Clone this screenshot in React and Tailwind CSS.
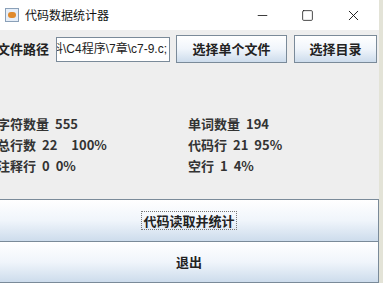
import { Minus, Square, X } from 'lucide-react'

const font = { fontFamily: '"Noto Sans CJK SC", "Noto Sans", sans-serif' }

function JButton({ children, className = '', focused = false }) {
  return (
    <div
      className={`flex items-center justify-center border border-[#7a8a99] bg-gradient-to-b from-[#ffffff] via-[#f0f5fb] to-[#cddcec] text-[13px] font-bold text-[#222] ${className}`}
    >
      <span className={focused ? 'border border-dotted border-[#777] px-[1px] leading-[17px]' : ''}>{children}</span>
    </div>
  )
}

function Stat({ label, value, extra }) {
  return (
    <div className="flex h-[21px] items-center gap-[6px] whitespace-nowrap text-[13px] font-bold text-[#333]">
      <span>{label}</span>
      <span>{value}</span>
      {extra && <span>{extra}</span>}
    </div>
  )
}

export default function App() {
  return (
    <div className="flex h-[283px] w-[383px] overflow-hidden bg-[#e3e3d7]" style={font}>
      <div className="flex w-[379px] flex-col bg-[#eeeeee]">
        {/* Title bar */}
        <div className="flex h-[30px] items-center bg-white">
          <div className="ml-[5px] flex h-[14px] w-[14px] items-center justify-center border border-[#8aa0b8] bg-[#e6eef8]">
            <div className="h-[6px] w-[8px] rounded-sm bg-[#e08a2c]" />
          </div>
          <span className="ml-[6px] text-[12px] text-[#111]">代码数据统计器</span>
          <div className="ml-auto flex items-center">
            <Minus size={15} strokeWidth={1.3} className="mr-[31px] text-[#111]" />
            <Square size={13} strokeWidth={1.4} className="mr-[31px] text-[#111]" />
            <X size={17} strokeWidth={1.3} className="mr-[17px] text-[#111]" />
          </div>
        </div>

        {/* Path row */}
        <div className="mt-[5px] flex h-[28px] items-center">
          <span className="ml-[-3px] text-[13px] font-bold text-[#222]">文件路径</span>
          <div className="ml-[7px] flex h-[25px] w-[114px] items-center justify-end overflow-hidden whitespace-nowrap border border-[#7a8a99] bg-white pr-[2px] text-[12px] text-[#222]" style={{ fontFamily: '"Liberation Sans", "Noto Sans CJK SC", sans-serif' }}>
            料\C4程序\7章\c7-9.c;
          </div>
          <JButton className="ml-[6px] h-[28px] w-[111px]">选择单个文件</JButton>
          <JButton className="ml-[7px] h-[28px] w-[83px]">选择目录</JButton>
        </div>

        {/* Stats */}
        <div className="mt-[50px] grid grid-cols-[188px_1fr]">
          <div className="ml-[-3px] flex flex-col">
            <Stat label="字符数量" value="555" />
            <Stat label="总行数" value="22" extra={<span className="ml-[8px]">100%</span>} />
            <Stat label="注释行" value="0" extra="0%" />
          </div>
          <div className="flex flex-col">
            <Stat label="单词数量" value="194" />
            <Stat label="代码行" value="21" extra="95%" />
            <Stat label="空行" value="1" extra="4%" />
          </div>
        </div>

        {/* Bottom buttons */}
        <div className="mt-auto flex flex-col">
          <JButton className="ml-[-1px] h-[43px]" focused>代码读取并统计</JButton>
          <JButton className="ml-[-1px] -mt-px h-[42px]">退出</JButton>
        </div>
      </div>
    </div>
  )
}
